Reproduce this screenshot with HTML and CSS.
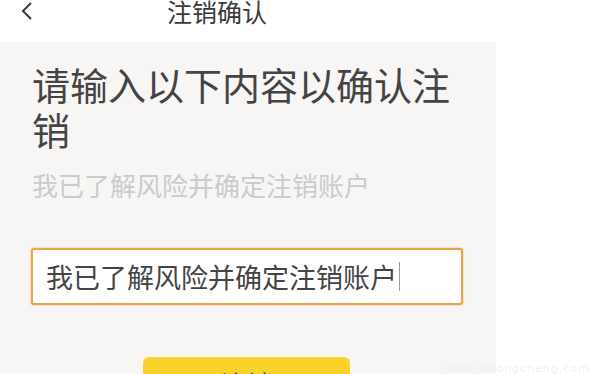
FILE: index.html
```html
<!DOCTYPE html>
<html lang="zh-CN">
<head>
  <meta charset="UTF-8">
  <meta name="viewport" content="width=device-width, initial-scale=1.0">
  <title>注销确认</title>
  <link rel="stylesheet" href="styles.css">
</head>
<body>
  <header class="top-bar">
    <a class="back" href="#" aria-label="返回">
      <svg width="14" height="20" viewBox="0 0 14 20">
        <polyline points="11,2 3,10 11,18" fill="none" stroke="#3a3a3a" stroke-width="2"/>
      </svg>
    </a>
    <h1 class="title">注销确认</h1>
  </header>

  <div class="page">
    <main class="panel">
      <h2 class="heading">请输入以下内容以确认注销</h2>
      <p class="hint">我已了解风险并确定注销账户</p>

      <div class="field">
        <span class="field-text">我已了解风险并确定注销账户</span>
        <span class="caret"></span>
      </div>

      <button class="confirm" type="button">注销</button>
    </main>
    <div class="side"></div>
  </div>

  <span class="watermark">www.xitongcheng.com</span>
</body>
</html>
```

FILE: styles.css
```css
html, body {
  margin: 0;
  padding: 0;
  height: 374px;
  overflow: hidden;
  background-color: #fff;
  font-family: "Noto Sans CJK SC", "Noto Sans", sans-serif;
}

.top-bar {
  display: grid;
  grid-template-columns: 54px 326px 54px;
  height: 42px;
  background-color: #fff;
}

.back {
  display: block;
  padding: 1px 0 0 20px;
  line-height: 0;
}

.title {
  margin: 0;
  font-size: 25px;
  font-weight: 400;
  line-height: 22px;
  text-align: center;
  color: #3a3a3a;
}

.page {
  display: flex;
  height: 332px;
}

.panel {
  width: 496px;
  box-sizing: border-box;
  padding: 19px 24px 0 32px;
  background-color: #f7f6f5;
}

.side {
  flex: 1;
  background-color: #fff;
}

.heading {
  margin: 0;
  font-size: 38px;
  font-weight: 400;
  line-height: 45px;
  color: #444;
}

.hint {
  margin: 19px 0 0;
  font-size: 26px;
  line-height: 30px;
  color: #cbcbcb;
}

.field {
  display: flex;
  align-items: center;
  width: 432px;
  height: 57px;
  box-sizing: border-box;
  margin: 48px 0 0 -1px;
  padding-left: 13px;
  background-color: #fff;
  border: 2px solid #e8a446;
  border-radius: 3px;
  box-shadow: 0 0 2px rgba(205, 130, 40, 0.6);
}

.field-text {
  font-size: 27px;
  line-height: 30px;
  color: #444;
}

.caret {
  width: 1px;
  height: 29px;
  margin-left: 2px;
  background-color: #9a9a9a;
}

.confirm {
  display: block;
  width: 207px;
  height: 50px;
  margin: 52px 0 0 111px;
  padding: 4px 0 0;
  border: none;
  border-radius: 6px;
  background-color: #fad22c;
  color: #333;
  font-family: inherit;
  font-size: 26px;
  line-height: 30px;
}

.watermark {
  position: absolute;
  left: 446px;
  top: 362px;
  font-family: "DejaVu Sans", sans-serif;
  font-size: 11px;
  letter-spacing: 1px;
  color: #f0f0f0;
}
```
